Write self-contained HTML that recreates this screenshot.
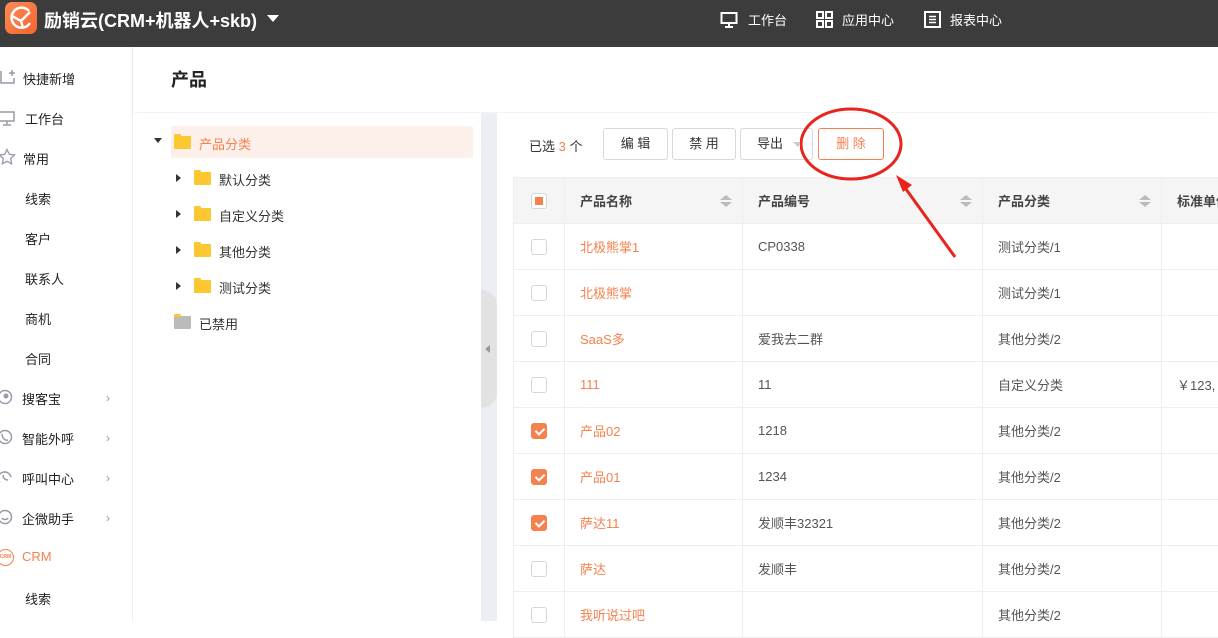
<!DOCTYPE html><html><head><meta charset="utf-8"><style>
*{box-sizing:border-box;margin:0;padding:0}
body{width:1218px;height:621px;overflow:hidden;background:#fff;font-family:"Liberation Sans","Noto Sans CJK SC",sans-serif;font-size:13px;color:#333;position:relative}
.top{position:absolute;left:0;top:0;width:1218px;height:47px;background:#3c3c3c;color:#fff}
.abs{position:absolute}
.side{position:absolute;left:0;top:47px;width:133px;height:574px;background:#fff;border-right:1px solid #eee}
.si{position:absolute;left:0;font-size:13px;color:#222}
.chev{position:absolute;left:106px;color:#999;font-size:12px}
.hdr{position:absolute;left:134px;top:47px;width:1084px;height:65px;background:#fff;box-shadow:0 2px 3px rgba(0,0,0,.06)}
.tree{position:absolute;left:134px;top:113px;width:347px;height:508px;background:#fff}
.folder{position:absolute;width:17px;height:13px;background:#fcc832;border-radius:1px}
.folder:before{content:"";position:absolute;left:0;top:-2px;width:7px;height:3px;background:#fcc832;border-radius:1px 1px 0 0}
.tri{position:absolute;width:0;height:0;border-top:4px solid transparent;border-bottom:4px solid transparent;border-left:5px solid #333}
.btn{position:absolute;top:128px;height:32px;border:1px solid #d9d9d9;border-radius:3px;background:#fff;text-align:center;line-height:30px;font-size:13px;color:#333}
table{position:absolute;left:513px;top:177px;width:728px;border-collapse:collapse;table-layout:fixed}
td,th{height:46px;border:1px solid #eee;text-align:left;padding-left:15px;font-weight:normal;font-size:13px;color:#555;white-space:nowrap;overflow:hidden}
th{background:#f5f5f5;font-weight:bold;color:#444;position:relative}
.o{color:#f5814f}
.cb{display:inline-block;width:16px;height:16px;border:1px solid #d6d6d6;border-radius:3px;vertical-align:middle;position:relative;background:#fff}
.cb.on{background:#f5814f;border-color:#f5814f}
.cb.on:after{content:"";position:absolute;left:5px;top:2px;width:4px;height:7px;border:solid #fff;border-width:0 2px 2px 0;transform:rotate(45deg)}
.cb.half:after{content:"";position:absolute;left:3px;top:3px;width:8px;height:8px;background:#f5814f}
.sort{position:absolute;right:10px;top:17px;width:0;height:0}
.sort:before{content:"";position:absolute;left:-12px;top:0;border-left:6px solid transparent;border-right:6px solid transparent;border-bottom:5px solid #bbb}
.sort:after{content:"";position:absolute;left:-12px;top:7px;border-left:6px solid transparent;border-right:6px solid transparent;border-top:5px solid #bbb}
</style></head><body>
<div class="top">
 <div class="abs" style="left:5px;top:2px;width:32px;height:32px;border-radius:7px;background:linear-gradient(135deg,#ff8a55,#f2662f)">
  <svg width="32" height="32" viewBox="0 0 32 32"><path d="M24 9 A10 10 0 1 0 25 21" fill="none" stroke="#fff" stroke-width="2.5"/><path d="M7 14 L16 19 L25 10 M16 19 L18 26" fill="none" stroke="#fff" stroke-width="2.5"/></svg>
 </div>
 <div class="abs" style="left:44px;top:7px;font-size:18px;font-weight:bold">励销云(CRM+机器人+skb)</div>
 <div class="abs" style="left:267px;top:15px;border-left:6px solid transparent;border-right:6px solid transparent;border-top:7px solid #fff"></div>
 <svg class="abs" style="left:720px;top:11px" width="18" height="18" viewBox="0 0 18 18"><rect x="1.5" y="2" width="15" height="10" fill="none" stroke="#fff" stroke-width="2"/><path d="M9 12v3M5 16h8" stroke="#fff" stroke-width="2"/></svg>
 <div class="abs" style="left:748px;top:10px;font-size:13px">工作台</div>
 <svg class="abs" style="left:816px;top:11px" width="17" height="17" viewBox="0 0 17 17"><g fill="none" stroke="#fff" stroke-width="2"><rect x="1" y="1" width="6" height="6"/><rect x="10" y="1" width="6" height="6"/><rect x="1" y="10" width="6" height="6"/><rect x="10" y="10" width="6" height="6"/></g></svg>
 <div class="abs" style="left:842px;top:10px;font-size:13px">应用中心</div>
 <svg class="abs" style="left:924px;top:11px" width="17" height="17" viewBox="0 0 17 17"><rect x="1" y="1" width="15" height="15" fill="none" stroke="#fff" stroke-width="2"/><path d="M5 5.5h7M5 8.5h7M5 11.5h7" stroke="#fff" stroke-width="1.5"/></svg>
 <div class="abs" style="left:950px;top:10px;font-size:13px">报表中心</div>
</div>
<div class="side">
 <svg class="abs" style="left:0;top:22px" width="16" height="16" viewBox="0 0 16 16"><path d="M1 2v12h13V9M9 4h6M12 1v6" fill="none" stroke="#99a" stroke-width="1.5"/></svg>
 <div class="si" style="left:23px;top:22px">快捷新增</div>
 <svg class="abs" style="left:0;top:63px" width="16" height="16" viewBox="0 0 16 16"><path d="M0 2h14v9H0M7 11v3M3 15h8" fill="none" stroke="#99a" stroke-width="1.5"/></svg>
 <div class="si" style="left:25px;top:62px">工作台</div>
 <svg class="abs" style="left:-2px;top:101px" width="18" height="18" viewBox="0 0 18 18"><path d="M9 1.5l2.3 4.8 5.2.7-3.8 3.6.9 5.2L9 13.3l-4.6 2.5.9-5.2L1.5 7l5.2-.7z" fill="none" stroke="#99a" stroke-width="1.3"/></svg>
 <div class="si" style="left:23px;top:102px">常用</div>
 <div class="si" style="left:25px;top:142px">线索</div>
 <div class="si" style="left:25px;top:182px">客户</div>
 <div class="si" style="left:25px;top:222px">联系人</div>
 <div class="si" style="left:25px;top:262px">商机</div>
 <div class="si" style="left:25px;top:302px">合同</div>
 <svg class="abs" style="left:-3px;top:342px" width="17" height="17" viewBox="0 0 17 17"><circle cx="8" cy="8" r="6.5" fill="none" stroke="#99a" stroke-width="1.5"/><circle cx="9" cy="7" r="2.5" fill="#99a"/></svg>
 <div class="si" style="left:22px;top:342px">搜客宝</div><div class="chev" style="top:344px">›</div>
 <svg class="abs" style="left:-3px;top:382px" width="17" height="17" viewBox="0 0 17 17"><circle cx="8" cy="8" r="6.5" fill="none" stroke="#99a" stroke-width="1.5"/><path d="M5 5c0 4 3 7 6 6" fill="none" stroke="#99a" stroke-width="1.5"/></svg>
 <div class="si" style="left:22px;top:382px">智能外呼</div><div class="chev" style="top:384px">›</div>
 <svg class="abs" style="left:-3px;top:422px" width="17" height="17" viewBox="0 0 17 17"><path d="M3 14A6.5 6.5 0 1 1 14 8" fill="none" stroke="#99a" stroke-width="1.5"/><path d="M6 6c0 3 2 5 5 5" fill="none" stroke="#99a" stroke-width="1.5"/></svg>
 <div class="si" style="left:22px;top:422px">呼叫中心</div><div class="chev" style="top:424px">›</div>
 <svg class="abs" style="left:-3px;top:462px" width="17" height="17" viewBox="0 0 17 17"><circle cx="8" cy="8" r="6.5" fill="none" stroke="#99a" stroke-width="1.5"/><path d="M5 9c1 2 5 2 6 0" fill="none" stroke="#99a" stroke-width="1.5"/></svg>
 <div class="si" style="left:22px;top:462px">企微助手</div><div class="chev" style="top:464px">›</div>
 <div class="abs" style="left:-3px;top:502px;width:17px;height:17px;border:1.5px solid #f5814f;border-radius:50%;font-size:5px;color:#f5814f;line-height:14px;text-align:center;font-weight:bold">CRM</div>
 <div class="si" style="left:22px;top:502px;color:#f5814f">CRM</div>
 <div class="si" style="left:25px;top:542px">线索</div>
</div>
<div class="hdr"><div class="abs" style="left:37px;top:19px;font-size:18px;font-weight:bold;color:#222">产品</div></div>
<div class="abs" style="left:134px;top:113px;width:1084px;height:508px;background:#fff"></div>
<div class="abs" style="left:481px;top:113px;width:16px;height:508px;background:#eceef4"></div>
<div class="abs" style="left:481px;top:290px;width:16px;height:118px;background:#e2e2e2;border-radius:0 16px 16px 0"></div>
<div class="abs" style="left:485px;top:345px;border-top:4px solid transparent;border-bottom:4px solid transparent;border-right:5px solid #999"></div>
<div class="tree">
 <div class="tri" style="left:20px;top:25px;border:none;border-left:4px solid transparent;border-right:4px solid transparent;border-top:5px solid #333"></div>
 <div class="abs" style="left:37px;top:13px;width:302px;height:32px;background:#fdf0ea;border-radius:2px"></div>
 <div class="folder" style="left:40px;top:23px"></div>
 <div class="abs" style="left:65px;top:21px;color:#f5814f">产品分类</div>
 <div class="tri" style="left:42px;top:61px"></div><div class="folder" style="left:60px;top:59px"></div><div class="abs" style="left:85px;top:57px">默认分类</div>
 <div class="tri" style="left:42px;top:97px"></div><div class="folder" style="left:60px;top:95px"></div><div class="abs" style="left:85px;top:93px">自定义分类</div>
 <div class="tri" style="left:42px;top:133px"></div><div class="folder" style="left:60px;top:131px"></div><div class="abs" style="left:85px;top:129px">其他分类</div>
 <div class="tri" style="left:42px;top:169px"></div><div class="folder" style="left:60px;top:167px"></div><div class="abs" style="left:85px;top:165px">测试分类</div>
 <div class="folder" style="left:40px;top:203px;background:#bbb"></div><div class="abs" style="left:65px;top:201px">已禁用</div>
</div>
<div class="abs" style="left:529px;top:136px">已选 <span class="o">3</span> 个</div>
<div class="btn" style="left:603px;width:65px">编 辑</div>
<div class="btn" style="left:672px;width:64px">禁 用</div>
<div class="btn" style="left:740px;width:73px;text-align:left;padding-left:16px">导出 <span style="display:inline-block;margin-left:6px;border-left:5px solid transparent;border-right:5px solid transparent;border-top:5px solid #ccc;vertical-align:middle"></span></div>
<div class="btn" style="left:818px;width:66px;border-color:#f5814f;color:#f5814f">删 除</div>
<table>
<colgroup><col style="width:51px"><col style="width:178px"><col style="width:240px"><col style="width:179px"><col style="width:80px"></colgroup>
<tr><th style="padding-left:17px"><span class="cb half"></span></th><th>产品名称<span class="sort"></span></th><th>产品编号<span class="sort"></span></th><th>产品分类<span class="sort"></span></th><th>标准单价</th></tr>
<tr><td style="padding-left:17px"><span class="cb"></span></td><td class="o">北极熊掌1</td><td>CP0338</td><td>测试分类/1</td><td></td></tr>
<tr><td style="padding-left:17px"><span class="cb"></span></td><td class="o">北极熊掌</td><td></td><td>测试分类/1</td><td></td></tr>
<tr><td style="padding-left:17px"><span class="cb"></span></td><td class="o">SaaS多</td><td>爱我去二群</td><td>其他分类/2</td><td></td></tr>
<tr><td style="padding-left:17px"><span class="cb"></span></td><td class="o">111</td><td>11</td><td>自定义分类</td><td>￥123,</td></tr>
<tr><td style="padding-left:17px"><span class="cb on"></span></td><td class="o">产品02</td><td>1218</td><td>其他分类/2</td><td></td></tr>
<tr><td style="padding-left:17px"><span class="cb on"></span></td><td class="o">产品01</td><td>1234</td><td>其他分类/2</td><td></td></tr>
<tr><td style="padding-left:17px"><span class="cb on"></span></td><td class="o">萨达11</td><td>发顺丰32321</td><td>其他分类/2</td><td></td></tr>
<tr><td style="padding-left:17px"><span class="cb"></span></td><td class="o">萨达</td><td>发顺丰</td><td>其他分类/2</td><td></td></tr>
<tr><td style="padding-left:17px"><span class="cb"></span></td><td class="o">我听说过吧</td><td></td><td>其他分类/2</td><td></td></tr>
</table>
<svg class="abs" style="left:800px;top:105px;z-index:10" width="160" height="160" viewBox="0 0 160 160">
<ellipse cx="51" cy="39" rx="50" ry="35" fill="none" stroke="#e8241c" stroke-width="3"/>
<path d="M103 80 L155 152" stroke="#e8241c" stroke-width="3"/>
<path d="M96 70 L112 80 L103 87 Z" fill="#e8241c"/>
</svg>
</body></html>
